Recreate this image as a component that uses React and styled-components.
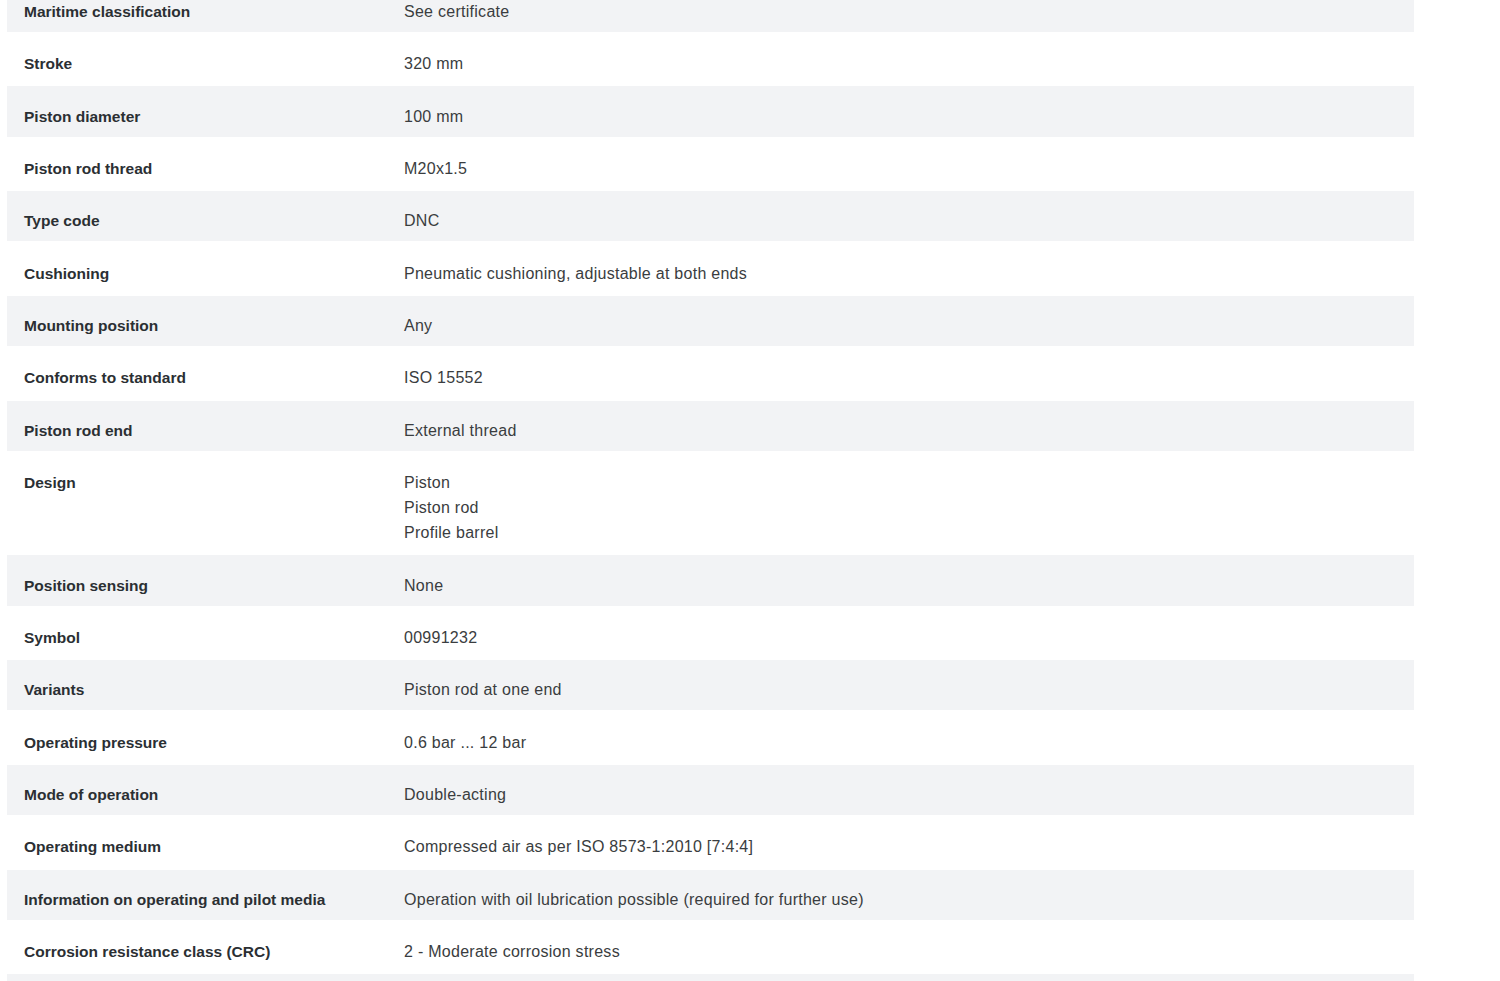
import styled, { createGlobalStyle } from "styled-components"

const GlobalStyle = createGlobalStyle`
    html, body {
        margin: 0;
        padding: 0;
        background: #fff;
        overflow: hidden;
    }
    body {
        font-family: "Liberation Sans", Arial, sans-serif;
        color: #333;
    }
`;

const Page = styled.main`
    width: 1407px;
    padding-left: 7px;
    margin-top: -19.4px; // page is scrolled, first row partly hidden
`;

const Table = styled.div`
    display: flex;
    flex-direction: column;
`;

const Row = styled.div`
    display: grid;
    grid-template-columns: 380px 1fr;
    padding: 0 17px;
    border-top: 1px solid #fff;
    border-bottom: 1px solid #fff;
    background: ${({ $shaded }) => ($shaded ? "#f2f3f5" : "#fff")};
`;

const Cell = styled.div`
    padding: 17.2px 0 8.2px;
    line-height: 25px;
`;

const Label = styled(Cell)`
    font-size: 15.5px;
    font-weight: 700;
    color: #2b2f33;
`;

const Value = styled(Cell)`
    font-size: 16px;
    letter-spacing: 0.27px;
    color: #3a3d40;
    display: flex;
    flex-direction: column;
`;

const specs = [
    ["Maritime classification", ["See certificate"]],
    ["Stroke", ["320 mm"]],
    ["Piston diameter", ["100 mm"]],
    ["Piston rod thread", ["M20x1.5"]],
    ["Type code", ["DNC"]],
    ["Cushioning", ["Pneumatic cushioning, adjustable at both ends"]],
    ["Mounting position", ["Any"]],
    ["Conforms to standard", ["ISO 15552"]],
    ["Piston rod end", ["External thread"]],
    ["Design", ["Piston", "Piston rod", "Profile barrel"]],
    ["Position sensing", ["None"]],
    ["Symbol", ["00991232"]],
    ["Variants", ["Piston rod at one end"]],
    ["Operating pressure", ["0.6 bar ... 12 bar"]],
    ["Mode of operation", ["Double-acting"]],
    ["Operating medium", ["Compressed air as per ISO 8573-1:2010 [7:4:4]"]],
    ["Information on operating and pilot media", ["Operation with oil lubrication possible (required for further use)"]],
    ["Corrosion resistance class (CRC)", ["2 - Moderate corrosion stress"]],
    ["Ambient temperature", ["-20 °C ... 80 °C"]],
];

const App = () => {
    return (
        <Page>
            <GlobalStyle />
            <Table>
                {specs.map(([name, values], i) => (
                    <Row key={name} $shaded={i % 2 === 0}>
                        <Label>{name}</Label>
                        <Value>
                            {values.map((v) => (
                                <span key={v}>{v}</span>
                            ))}
                        </Value>
                    </Row>
                ))}
            </Table>
        </Page>
    )
}

export default App
